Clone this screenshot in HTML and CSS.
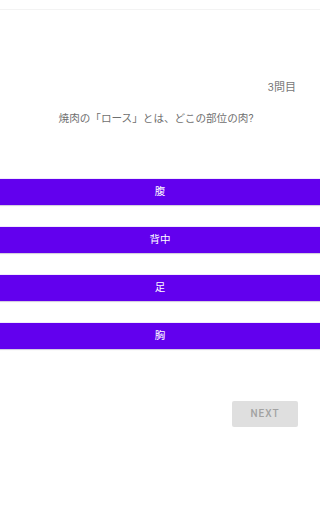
FILE: index.html
```html
<!DOCTYPE html>
<html lang="ja">
<head>
<meta charset="utf-8">
<meta name="viewport" content="width=device-width, initial-scale=1">
<link rel="stylesheet" href="styles.css">
</head>
<body>
<div class="app">
  <div class="topbar"></div>
  <div class="counter">3問目</div>
  <div class="question">焼肉の「ロース」とは、どこの部位の肉?</div>
  <div class="choices">
    <div class="choice">腹</div>
    <div class="choice">背中</div>
    <div class="choice">足</div>
    <div class="choice">胸</div>
  </div>
  <div class="footer">
    <div class="next">NEXT</div>
  </div>
</div>
</body>
</html>
```

FILE: styles.css
```css
html, body {
  margin: 0;
  padding: 0;
  background: #ffffff;
}
body {
  min-height: 512px;
  overflow: hidden;
  font-family: Roboto, "Noto Sans CJK JP", sans-serif;
}
.app {
  display: flex;
  flex-direction: column;
}
.topbar {
  height: 9px;
  border-bottom: 1px solid #f3f3f3;
}
.counter {
  margin-top: 71px;
  height: 14px;
  line-height: 14px;
  text-align: right;
  padding-right: 24px;
  font-size: 11px;
  color: #777777;
}
.question {
  margin-top: 17px;
  height: 14px;
  line-height: 14px;
  text-align: center;
  padding-right: 8px;
  font-size: 10.6px;
  color: #6f6f6f;
}
.choices {
  margin-top: 53px;
  display: flex;
  flex-direction: column;
  gap: 22px;
}
.choice {
  height: 26px;
  line-height: 26px;
  background: #6200ee;
  color: #ffffff;
  text-align: center;
  font-size: 10.5px;
  box-shadow: 0 0 1px rgba(98, 0, 238, 0.5), 0 1px 1px rgba(0, 0, 0, 0.12);
}
.footer {
  margin-top: 52px;
  display: flex;
  justify-content: flex-end;
  padding-right: 22px;
}
.next {
  width: 66px;
  height: 26px;
  line-height: 26px;
  border-radius: 2px;
  background: #dfdfdf;
  color: #a2a2a2;
  text-align: center;
  font-size: 10px;
  font-weight: 500;
  letter-spacing: 1px;
}
```
